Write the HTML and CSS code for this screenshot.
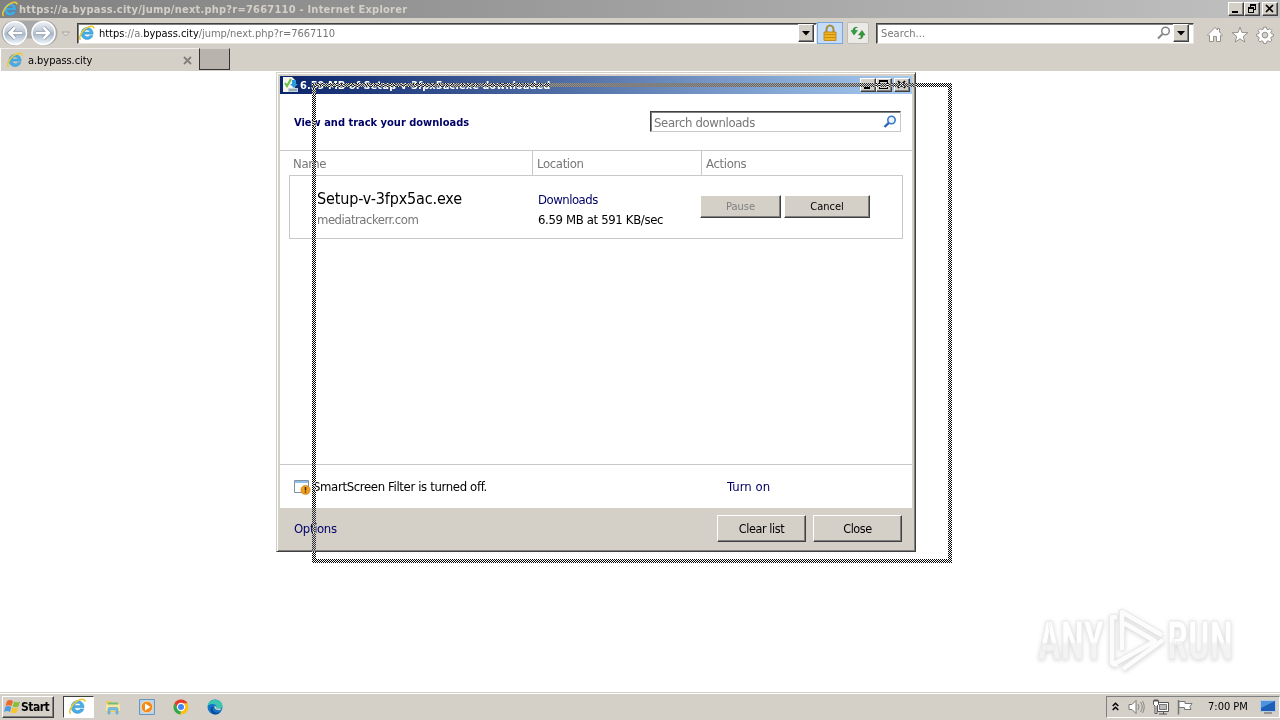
FILE: index.html
```html
<!DOCTYPE html>
<html lang="en">
<head>
  <meta charset="UTF-8">
  <title>a.bypass.city - Internet Explorer</title>
  <link rel="stylesheet" href="styles.css">
</head>
<body>

  <!-- shared icons -->
  <svg class="defs" width="0" height="0">
    <symbol id="ie" viewBox="0 0 16 16">
      <path d="M14.2 9.2H5.300c.1 1.600 1.400 2.500 2.900 2.500 1.100 0 2-.5 2.500-1.300h3.200c-.9 2.700-3 4.100-5.700 4.100-3.700 0-6.100-2.500-6.100-6s2.500-6 6.100-6c3.800 0 6 2.700 6 6.700zM5.400 7h5.500c-.2-1.300-1.200-2.100-2.700-2.100S5.600 5.700 5.400 7z" fill="#45aee6" stroke="#2b85c4" stroke-width=".4"/>
      <path d="M1.600 14.800C-.8 13 2.200 7 6.500 3.700 10.600.6 14.800.1 15 3.500" fill="none" stroke="#ecc832" stroke-width="1.500"/>
    </symbol>
    <symbol id="min" viewBox="0 0 12 10"><path d="M2 7h6v2H2z"/></symbol>
    <symbol id="restore" viewBox="0 0 12 10"><path d="M4 0h6v6H8V5h1V2H5v1H4zM2 3h6v6H2zm1 2v3h4V5z" fill-rule="evenodd"/></symbol>
    <symbol id="max" viewBox="0 0 12 10"><path d="M1 0h9v9H1zm1 2v6h7V2z" fill-rule="evenodd"/></symbol>
    <symbol id="x" viewBox="0 0 12 10"><path d="M2 1l7 7M9 1L2 8" stroke="#000" stroke-width="1.700"/></symbol>
    <symbol id="arrow" viewBox="0 0 8 5"><path d="M0 0h8L4 4.500z"/></symbol>
  </svg>

  <header class="titlebar">
    <svg class="ico16"><use href="#ie"/></svg>
    <span class="title-text">https://a.bypass.city/jump/next.php?r=7667110 - Internet Explorer</span>
    <div class="win-buttons">
      <button><svg><use href="#min"/></svg></button>
      <button><svg><use href="#restore"/></svg></button>
      <button class="close"><svg><use href="#x"/></svg></button>
    </div>
  </header>

  <nav class="navbar">
    <svg class="travel" width="72" height="28" viewBox="0 0 72 28">
      <defs>
        <linearGradient id="ball" x1="0" y1="0" x2="0" y2="1">
          <stop offset="0" stop-color="#edf1f6"/><stop offset=".45" stop-color="#bdc8d5"/>
          <stop offset=".55" stop-color="#a9b9ca"/><stop offset="1" stop-color="#f1faff"/>
        </linearGradient>
      </defs>
      <path d="M14 1.500h31a12.500 12.500 0 0 1 0 25q-8 0-13-7h-5q-5 7-13 7a12.500 12.500 0 0 1 0-25z" fill="#a8a8a8"/>
      <circle cx="15" cy="14" r="11.500" fill="url(#ball)" stroke="#fff" stroke-width="1.500"/>
      <circle cx="43.500" cy="14" r="11.500" fill="url(#ball)" stroke="#fff" stroke-width="1.500"/>
      <path d="M15 8.500L9.500 14l5.500 5.500M10 14h12" class="travel-edge"/>
      <path d="M43.500 8.500L49 14l-5.500 5.500M48 14H36" class="travel-edge"/>
      <path d="M15 8.500L9.500 14l5.500 5.500M10 14h12" class="travel-arrow"/>
      <path d="M43.500 8.500L49 14l-5.500 5.500M48 14H36" class="travel-arrow"/>
      <path d="M62 13h7.500l-3.700 4z" fill="#e4e1db" stroke="#aaa69f"/>
    </svg>

    <div class="field address">
      <svg class="ico16"><use href="#ie"/></svg>
      <span class="url"><b>https</b>://a.<b>bypass.city</b>/jump/next.php?r=7667110</span>
      <button class="drop"><svg><use href="#arrow"/></svg></button>
    </div>
    <div class="tool lock">
      <svg width="16" height="18" viewBox="0 0 16 18">
        <path d="M4.500 9V5.500a3.500 4 0 0 1 7 0V9" fill="none" stroke="#a98a3c" stroke-width="2"/>
        <path d="M2 8h12v8.500H2z" fill="#f0b323" stroke="#b67c10" stroke-width=".8"/>
        <path d="M2.500 10.500h11M2.500 13.500h11" stroke="#c98c14"/>
      </svg>
    </div>
    <div class="tool refresh">
      <svg width="16" height="16" viewBox="0 0 16 16">
        <path d="M7.500 2.500Q5 2 5 4v1.500H7.500L4 10 1 5.500h2Q3 1.500 7.500 2.500z" fill="#2ea043" stroke="#1a7a30" stroke-width=".5"/>
        <path d="M8.500 13.500q2.500.5 2.500-1.500v-2H8.500L12 5.500l3 4.500h-2q0 4.500-4.500 3.500z" fill="#2e9d32" stroke="#1d6e20" stroke-width=".5"/>
      </svg>
    </div>
    <div class="field search">
      <span>Search...</span>
      <svg width="14" height="14" viewBox="0 0 14 14"><circle cx="8.500" cy="5" r="3.800" fill="none" stroke="#858585" stroke-width="1.500"/><path d="M5.500 8L1 12.500" stroke="#858585" stroke-width="2"/></svg>
      <button class="drop"><svg><use href="#arrow"/></svg></button>
    </div>
    <div class="commands">
      <svg width="18" height="18" viewBox="0 0 18 18"><path d="M1.500 9L9 1.500l2.500 2.500V2.500h2V6l3 3-1 1-1-.7v6.200h-4v-5h-3v5h-4V9.300l-1 .7z"/></svg>
      <svg width="18" height="18" viewBox="0 0 18 18"><path d="M9 1.200l2 5.300 5.800.2-4.500 3.600 1.500 5.700L9 12.900 4.200 16l1.500-5.700L1.200 6.700 7 6.500z"/></svg>
      <svg width="18" height="18" viewBox="0 0 18 18"><path fill-rule="evenodd" d="M7.600 1.200h2.800l.4 2 1.300.6 1.900-1.200 1.900 2-1.200 1.700.6 1.400 2 .4v2.300l-2 .5-.6 1.400 1.200 1.800-1.900 1.900-1.800-1.200-1.400.6-.4 2H7.600l-.5-2-1.300-.6L4 16l-1.900-1.900 1.200-1.800-.6-1.400-2-.5V8.100l2-.4.600-1.400-1.200-1.700 1.900-2 1.800 1.200 1.400-.6zM9 6.200a2.900 2.900 0 1 0 0 5.800 2.900 2.900 0 0 0 0-5.800z"/></svg>
    </div>
  </nav>

  <div class="tabs">
    <div class="tab">
      <svg class="ico16"><use href="#ie"/></svg>
      <span>a.bypass.city</span>
      <svg class="tab-close" width="9" height="9" viewBox="0 0 9 9"><path d="M1 1l7 7M8 1L1 8" stroke="#858079" stroke-width="1.800"/></svg>
    </div>
    <div class="new-tab"></div>
  </div>

  <main class="page">
    <svg class="watermark" width="204" height="72" viewBox="0 0 204 72">
      <defs>
        <linearGradient id="fade" x1="0" y1="0" x2="0" y2="1">
          <stop offset=".5" stop-color="#fff"/><stop offset=".55" stop-color="#f3f3f3"/>
        </linearGradient>
      </defs>
      <g class="mark">
        <text x="5" y="55" textLength="66" lengthAdjust="spacingAndGlyphs">ANY</text>
        <text x="134" y="55" textLength="66" lengthAdjust="spacingAndGlyphs">RUN</text>
        <path d="M84 13h-5v46l6 2M89 46V8l40 23M91 19l31 18-43 24M130 36L90 65" class="play-edge"/>
        <path d="M84 13h-5v46l6 2M89 46V8l40 23M91 19l31 18-43 24M130 36L90 65" class="play"/>
      </g>
    </svg>
  </main>

  <section class="dialog">
    <div class="dialog-title">
      <svg width="16" height="16" viewBox="0 0 16 16">
        <path d="M1 0h9l3 3v12H1z" fill="#f5f5ee"/><path d="M3 6l2 3 4-7" fill="none" stroke="#6abf45" stroke-width="2"/>
        <path d="M10 3h4v4h2l-4 4-4-4h2z" fill="#2b9be0"/><path d="M6 11h10v4H6z" fill="#c6d4dd"/><path d="M7 13h8" stroke="#6b7c8b"/>
      </svg>
      <span>6.59 MB of Setup-v-3fpx5ac.exe downloaded</span>
      <div class="win-buttons">
        <button><svg><use href="#min"/></svg></button>
        <button><svg><use href="#max"/></svg></button>
        <button class="close"><svg><use href="#x"/></svg></button>
      </div>
    </div>

    <div class="dialog-head">
      <h1>View and track your downloads</h1>
      <div class="field find">
        <span>Search downloads</span>
        <svg width="14" height="14" viewBox="0 0 14 14"><circle cx="8.500" cy="5" r="3.700" fill="#eaf4ff" stroke="#3a78c8" stroke-width="1.600"/><path d="M5.800 7.800L1.500 12" stroke="#2d66b5" stroke-width="2.400"/></svg>
      </div>
    </div>

    <div class="columns">
      <span>Name</span><span>Location</span><span>Actions</span>
    </div>

    <div class="download">
      <div class="file">
        <div class="file-name">Setup-v-3fpx5ac.exe</div>
        <div class="file-host">mediatrackerr.com</div>
      </div>
      <div class="location">
        <a>Downloads</a>
        <div class="speed">6.59 MB at 591 KB/sec</div>
      </div>
      <div class="actions">
        <button class="btn small" disabled>Pause</button>
        <button class="btn small cancel">Cancel</button>
      </div>
    </div>

    <div class="smartscreen">
      <svg width="17" height="16" viewBox="0 0 17 16">
        <path d="M.5 1.500h14v12H.5z" fill="#fff" stroke="#8193a3"/><path d="M1 2h13v2H1z" fill="#8dc2ec"/>
        <circle cx="11.500" cy="11" r="4.600" fill="#f0a01e" stroke="#c77812" stroke-width=".6"/><path d="M11.500 8v3.500M11.500 12.500v1.300" stroke="#462800" stroke-width="1.500"/>
      </svg>
      <span class="filter-text">SmartScreen Filter is turned off.</span>
      <a class="turn-on">Turn on</a>
    </div>

    <footer class="dialog-foot">
      <a>Options</a>
      <button class="btn">Clear list</button>
      <button class="btn">Close</button>
    </footer>
  </section>

  <!-- window outline while dragging -->
  <div class="drag-outline"></div>

  <footer class="taskbar">
    <button class="start">
      <svg width="17" height="15" viewBox="0 0 17 15">
        <path d="M3 2q3-2 6 0L7.500 7q-3-1.500-6 0z" fill="#ed6a2c"/><path d="M10 2.500q3 1.500 6 0L14.500 7.500q-3 1.500-6 0z" fill="#8abf3e"/>
        <path d="M1.300 8q3-2 6 0L6 13q-3-2-6 0z" fill="#4a9be0"/><path d="M8.200 8.500q3 1.500 6 0L12.700 13.500q-3 1.500-6 0z" fill="#f8c62c"/>
      </svg>
      <span>Start</span>
    </button>
    <div class="task active"><svg width="17" height="17"><use href="#ie"/></svg></div>
    <div class="task">
      <svg width="16" height="16" viewBox="0 0 16 16"><path d="M1 2h5l1 1.500h7V13H1z" fill="#e9cb68"/><path d="M3 3.500h10V7H3z" fill="#73bd7c"/><path d="M1 5.500h14V12H1z" fill="#f8e6a0"/><path d="M3 15v-5q0-1.500 1.500-1.500h7q1.500 0 1.500 1.500v5h-2v-4H5v4z" fill="#78bde4" stroke="#4a98c6" stroke-width=".5"/></svg>
    </div>
    <div class="task">
      <svg width="16" height="16" viewBox="0 0 16 16"><path d="M.5.5h15v15H.5z" fill="#b8d5ee" stroke="#6896c1"/><circle cx="8" cy="8" r="5.800" fill="#f28a1c" stroke="#fbd5a2"/><path d="M6 4.500v7L11.500 8z" fill="#fff"/></svg>
    </div>
    <div class="task">
      <svg width="16" height="16" viewBox="0 0 16 16"><circle cx="8" cy="8" r="7.500" fill="#fbc116"/><path d="M1.500 4.250a7.500 7.500 0 0 1 13 0H8L4.750 9.900z" fill="#e33b2e"/><path d="M1.500 4.250L4.750 9.900 8 11.700l-.8 3.750A7.500 7.500 0 0 1 1.500 4.250z" fill="#2da94f"/><circle cx="8" cy="8" r="3.600" fill="#4285f4" stroke="#fff" stroke-width="1.200"/></svg>
    </div>
    <div class="task">
      <svg width="16" height="16" viewBox="0 0 16 16"><circle cx="8" cy="8" r="7.500" fill="#1475c8"/><path d="M.6 7C1-1.500 15.500-1.500 15.500 7c0 3-4 4-6 2.500C11 5 4 3.500.6 7z" fill="#3ac6b0"/><path d="M6.500 7.500q-2 4 2 6 3 1 5.500-1-3 4-8 2.500-4-3-1.500-7z" fill="#0a4e9b"/><path d="M7.500 7q-.5 3.500 3 4 2.500.5 4.500-1-2-.2-5.500-.5Q10.500 7.500 7.500 7z" fill="#d4d0c8"/></svg>
    </div>

    <div class="tray">
      <svg width="7" height="9" viewBox="0 0 7 9"><path d="M.7 4L3.500 1.200 6.300 4M.7 8l2.800-2.800L6.300 8" fill="none" stroke="#000" stroke-width="1.500"/></svg>
      <svg class="speaker" width="17" height="16" viewBox="0 0 17 16"><path d="M1 5.500h3l4-4v13l-4-4H1z" fill="#fff" stroke="#777"/><path d="M10 5q2 3 0 6M12.500 3q3.500 5 0 10M14.500 2q3.500 6 0 12" fill="none" stroke="#888"/></svg>
      <svg class="network" width="16" height="16" viewBox="0 0 16 16"><path d="M4.500 3.500h11v9h-11z" fill="#fff" stroke="#555"/><path d="M6.500 5.500h7v5h-7z" fill="#bbb" stroke="#777"/><path d="M6 15h8M10.500 12.500V15" stroke="#555"/><path d="M.5 1.500h5v4l-1.500 1.500V14.500H2V7L.5 5.500z" fill="#fff" stroke="#555"/><path d="M2 0v3M4 0v3" stroke="#555"/></svg>
      <svg class="flag" width="16" height="16" viewBox="0 0 16 16"><path d="M1.500 1v14.500" stroke="#777" stroke-width="1.500"/><path d="M2 2.500h6v2h7l-2 3 1 3H7.500v-2H2z" fill="#fff" stroke="#777"/></svg>
      <span class="clock">7:00 PM</span>
      <svg class="desktop" width="16" height="14" viewBox="0 0 16 14"><path d="M.5.5h15v11H.5z" fill="#1c5eb8" stroke="#b9cbe0"/><path d="M1 1h14L1 8z" fill="#4f93de"/><path d="M4 13h8" stroke="#555"/></svg>
    </div>
  </footer>

</body>
</html>
```
FILE: styles.css
```css
* {
  box-sizing: border-box;
}

body {
  margin: 0;
  width: 1280px;
  height: 720px;
  overflow: hidden;
  display: flex;
  flex-direction: column;
  background: #fff;
  color: #000;
  font-family: "DejaVu Sans Condensed", "DejaVu Sans", sans-serif;
  font-stretch: condensed;
  font-size: 11px;
  white-space: nowrap;
}

svg {
  display: block;
  flex: none;
}

button {
  font: inherit;
  padding: 0;
  border: 1px solid;
  border-color: #fff #404040 #404040 #fff;
  box-shadow: inset -1px -1px #808080;
  background: #d4d0c8;
}

.defs {
  position: absolute;
}

.ico16 {
  width: 16px;
  height: 16px;
}

/* title bar */
.titlebar {
  height: 18px;
  flex: none;
  display: flex;
  align-items: center;
  padding: 0 2px;
  background: linear-gradient(to right, #808080, #c0c0c0);
  color: #d4d0c8;
  font-weight: bold;
}

.title-text {
  margin-left: 1px;
  letter-spacing: 0.23px;
}

.win-buttons {
  display: flex;
  margin-left: auto;
}

.win-buttons button {
  width: 16px;
  height: 14px;
}

.win-buttons .close {
  margin-left: 2px;
}

.win-buttons svg {
  width: 12px;
  height: 10px;
  margin-left: 1px;
}

/* navigation */
.navbar {
  height: 30px;
  flex: none;
  display: flex;
  align-items: center;
  background: #d4d0c8;
}

.travel {
  margin-right: 5px;
}

.travel-edge,
.travel-arrow {
  fill: none;
  stroke: #8795a6;
  stroke-width: 4;
}

.travel-arrow {
  stroke: #fff;
  stroke-width: 2.5;
}

.field {
  display: flex;
  align-items: center;
  background: #fff;
  border: 1px solid;
  border-color: #404040 #e8e5df #e8e5df #404040;
  box-shadow: inset 1px 1px #808080;
}

.address {
  width: 740px;
  height: 21px;
  padding: 0 2px 0 1px;
}

.url {
  margin: 1px 0 0 4px;
  color: #777;
  letter-spacing: -0.04px;
}

.url b {
  color: #000;
  font-weight: normal;
}

.drop {
  width: 16px;
  height: 18px;
  margin-left: auto;
  display: flex;
  align-items: center;
  justify-content: center;
}

.drop svg {
  width: 8px;
  height: 5px;
}

.tool {
  display: flex;
  align-items: center;
  justify-content: center;
  height: 22px;
}

.lock {
  width: 26px;
  background: #c4dcf8;
  border: 1px solid #79a7df;
}

.refresh {
  width: 22px;
  margin: 0 7px 0 4px;
  background: #eceae7;
  border: 1px solid #c0bdb7;
  border-radius: 2px;
}

.search {
  width: 318px;
  height: 21px;
  padding: 0 4px;
  color: #777;
}

.search span {
  margin-top: 1px;
  letter-spacing: 0.1px;
}

.search > svg {
  margin-left: auto;
}

.search .drop {
  margin-left: 2px;
}

.commands {
  display: flex;
  gap: 7px;
  margin: 3px 0 0 12px;
}

.commands path {
  fill: #fff;
  stroke: #8b8780;
  stroke-width: 0.9;
}

/* tabs */
.tabs {
  height: 23px;
  flex: none;
  display: flex;
  background: #d4d0c8;
}

.tab {
  width: 199px;
  display: flex;
  align-items: center;
  padding: 0 7px 0 6px;
  border-top: 1px solid #f0eeea;
  border-left: 1px solid #fff;
}

.tab span {
  margin-left: 5px;
  letter-spacing: -0.05px;
}

.tab-close {
  margin-left: auto;
}

.new-tab {
  width: 31px;
  height: 22px;
  background: #b9b3ad;
  border: 1px solid #333;
  border-top-color: #d4d0c8;
}

.page {
  flex: 1;
  display: flex;
  align-items: flex-end;
  justify-content: flex-end;
  padding: 0 43px 16px 0;
}

.watermark {
  overflow: visible;
}

.mark {
  fill: url(#fade);
  stroke: #e9e9e9;
  stroke-width: 0.8;
  filter: drop-shadow(0 1px 2px rgba(0, 0, 0, 0.16));
  font-family: Roboto, sans-serif;
  font-size: 53px;
  font-weight: bold;
}

.play,
.play-edge {
  fill: none;
  stroke: #e4e4e4;
  stroke-width: 6;
  stroke-linejoin: round;
}

.play {
  stroke: #fcfcfc;
  stroke-width: 4.6;
}

/* downloads window */
.dialog {
  position: absolute;
  left: 276px;
  top: 72px;
  width: 640px;
  height: 480px;
  display: flex;
  flex-direction: column;
  padding: 3px;
  border: 1px solid;
  border-color: #d4d0c8 #404040 #404040 #d4d0c8;
  box-shadow: inset 1px 1px #fff, inset -1px -1px #808080, inset 0 0 0 3px #d4d0c8;
  background: #fff;
  font-size: 13px;
  letter-spacing: -0.35px;
}

.dialog a {
  color: #000066;
}

.dialog-title {
  height: 18px;
  flex: none;
  display: flex;
  align-items: center;
  padding: 0 2px;
  background: linear-gradient(to right, #0a246a, #a6caf0);
  color: #fff;
  font-size: 11px;
  font-weight: bold;
}

.dialog-title span {
  margin-left: 2px;
  letter-spacing: 0.02px;
}

.dialog-head {
  height: 57px;
  flex: none;
  display: flex;
  align-items: center;
  justify-content: space-between;
  padding: 0 11px 1px 14px;
  border-bottom: 1px solid #c8c8c8;
}

.dialog-head h1 {
  margin: 2px 0 0;
  font-size: 11px;
  letter-spacing: 0;
  color: #000066;
}

.find {
  width: 251px;
  height: 21px;
  padding: 0 3px;
  justify-content: space-between;
  color: #777;
  border-right-color: #c8c8c8;
  border-bottom-color: #c8c8c8;
}

.find span {
  margin-top: 1px;
}

.columns {
  height: 24px;
  flex: none;
  display: grid;
  grid-template-columns: 253px 169px 1fr;
  line-height: 26px;
  color: #777;
}

.columns span {
  height: 24px;
  padding-left: 4px;
  border-right: 1px solid #c8c8c8;
}

.columns span:first-child {
  padding-left: 13px;
}

.columns span:last-child {
  border: 0;
}

.download {
  height: 64px;
  flex: none;
  display: flex;
  margin: 0 9px;
  border: 1px solid #c8c8c8;
}

.file {
  width: 248px;
  padding: 13px 0 0 27px;
}

.file-name {
  font-size: 16px;
  line-height: 20px;
  letter-spacing: -0.15px;
}

.file-host {
  line-height: 22px;
  letter-spacing: -0.5px;
  color: #777;
}

.location {
  width: 162px;
  padding-top: 14px;
  line-height: 20px;
}

.location a {
  display: block;
  letter-spacing: -0.5px;
}

.actions {
  display: flex;
  gap: 3px;
  padding-top: 19px;
}

.btn {
  width: 89px;
  height: 27px;
  font-size: 12.5px;
  letter-spacing: -0.4px;
}

.btn.small {
  width: 81px;
  height: 23px;
  font-size: 11px;
  letter-spacing: 0;
}

.btn.small.cancel {
  width: 86px;
}

.btn:disabled {
  color: #808080;
}

.smartscreen {
  height: 44px;
  flex: none;
  margin-top: auto;
  display: flex;
  align-items: center;
  padding-left: 14px;
  border-top: 1px solid #c8c8c8;
}

.filter-text {
  width: 414px;
  margin-left: 2px;
}

.turn-on {
  letter-spacing: 0.05px;
}

.dialog-foot {
  height: 40px;
  flex: none;
  display: flex;
  align-items: center;
  gap: 7px;
  padding: 0 10px 0 14px;
  background: #d4d0c8;
}

.dialog-foot a {
  margin-right: auto;
}

.drag-outline {
  position: absolute;
  left: 312px;
  top: 83px;
  width: 640px;
  height: 480px;
  background: repeating-conic-gradient(#000 0 25%, #fff 0 50%) 0 0 / 2px 2px;
  mix-blend-mode: difference;
  clip-path: polygon(evenodd, 0 0, 640px 0, 640px 480px, 0 480px, 0 0, 4px 4px, 636px 4px, 636px 476px, 4px 476px, 4px 4px);
}

/* taskbar */
.taskbar {
  height: 28px;
  flex: none;
  display: flex;
  align-items: center;
  padding: 0 0 0 2px;
  border-top: 1px solid #d4d0c8;
  box-shadow: inset 0 1px #fff;
  background: #d4d0c8;
}

.start {
  width: 52px;
  height: 22px;
  display: flex;
  align-items: center;
  padding-left: 1px;
  font-weight: bold;
  margin-right: 9px;
}

.start span {
  font-size: 12px;
  letter-spacing: -0.5px;
}

.task {
  width: 34px;
  height: 22px;
  display: flex;
  align-items: center;
  justify-content: center;
}

.task.active {
  width: 31px;
  margin-right: 2px;
  padding-right: 3px;
  background: #fff;
  border: 1px solid;
  border-color: #404040 #fff #fff #404040;
}

.tray {
  width: 174px;
  height: 22px;
  margin-left: auto;
  display: flex;
  align-items: center;
  padding-left: 5px;
  border: 1px solid;
  border-color: #808080 #fff #fff #808080;
}

.speaker {
  margin-left: 9px;
}

.network {
  margin-left: 8px;
}

.flag {
  margin-left: 8px;
}

.clock {
  margin-left: 15px;
}

.desktop {
  margin-left: auto;
  margin-right: 3px;
}
```
